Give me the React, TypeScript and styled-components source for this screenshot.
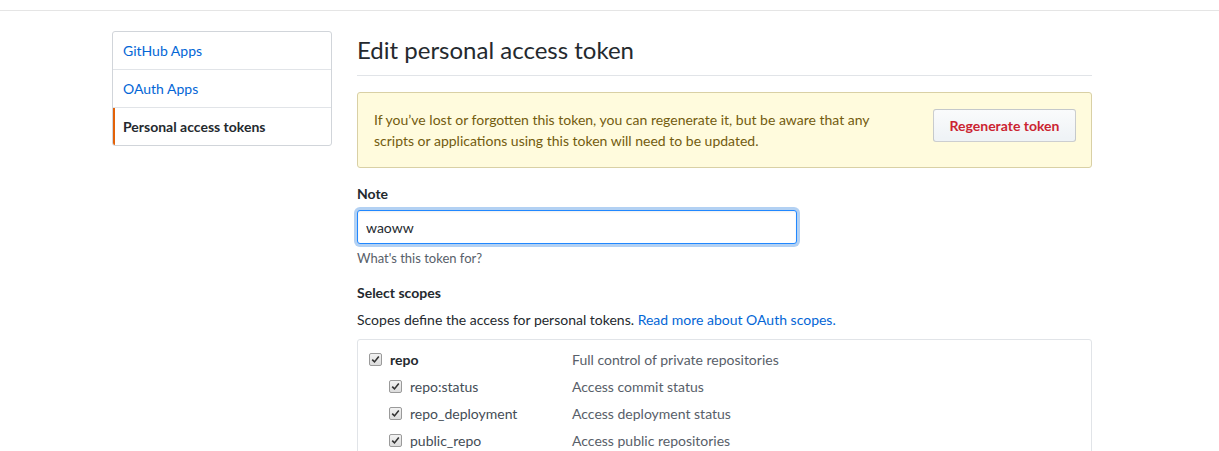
import React from "react";
import styled, { createGlobalStyle } from "styled-components";

const Global = createGlobalStyle`
  html, body { margin: 0; padding: 0; background: #fff; }
  body {
    font-family: "Segoe UI", Lato, "Liberation Sans", sans-serif;
    font-size: 14px;
    line-height: 1.5;
    color: #24292e;
  }
  * { box-sizing: border-box; }
`;

const Header = styled.div`
  height: 11px;
  border-bottom: 1px solid #e5e5e5;
`;

const Container = styled.div`
  display: flex;
  gap: 25px;
  width: 980px;
  margin-left: 112px;
  padding-top: 20px;
  align-items: flex-start;
`;

const Menu = styled.nav`
  width: 220px;
  flex: none;
  border: 1px solid #d1d5da;
  border-radius: 3px;
  overflow: hidden;
`;

const MenuItem = styled.a<{ $selected?: boolean }>`
  display: block;
  height: ${(p) => (p.$selected ? "37px" : "38px")};
  padding: 8px 10px 0 ${(p) => (p.$selected ? "8px" : "10px")};
  font-size: 14px;
  color: ${(p) => (p.$selected ? "#24292e" : "#0366d6")};
  font-weight: ${(p) => (p.$selected ? 700 : 400)};
  text-decoration: none;
  border-bottom: ${(p) => (p.$selected ? "none" : "1px solid #e1e4e8")};
  border-left: ${(p) => (p.$selected ? "2px solid #e36209" : "none")};
`;

const Main = styled.main`
  width: 735px;
  flex: none;
`;

const Subhead = styled.div`
  padding-bottom: 8px;
  border-bottom: 1px solid #e1e4e8;
`;

const Title = styled.h2`
  margin: 0;
  font-size: 24px;
  font-weight: 400;
  line-height: 36px;
  padding-top: 1px;
  height: 36px;
`;

const Flash = styled.div`
  margin-top: 16px;
  display: flex;
  align-items: flex-start;
  justify-content: space-between;
  padding: 16px 15px 16px 16px;
  background: #fffbdd;
  border: 1px solid #d9d0a5;
  border-radius: 3px;
  color: #735c0f;
  font-size: 14px;
  line-height: 21px;
`;

const FlashText = styled.p`
  margin: 0;
`;

const Button = styled.button`
  font-family: inherit;
  font-size: 14px;
  font-weight: 700;
  line-height: 20px;
  color: #cb2431;
  padding: 6px 12px;
  width: 143px;
  height: 33px;
  background: linear-gradient(-180deg, #fafbfc 0%, #eff3f6 90%);
  border: 1px solid rgba(27, 31, 35, 0.2);
  border-radius: 3px;
  cursor: pointer;
`;

const FormGroup = styled.div<{ $top: number }>`
  margin-top: ${(p) => p.$top}px;
`;

const Label = styled.label`
  display: block;
  font-weight: 700;
  font-size: 14px;
  line-height: 21px;
  margin-bottom: 6px;
`;

const Input = styled.input`
  display: block;
  width: 440px;
  height: 34px;
  padding: 6px 8px;
  font-family: inherit;
  font-size: 14px;
  color: #24292e;
  border: 1px solid #2188ff;
  border-radius: 3px;
  outline: none;
  box-shadow: inset 0 1px 2px rgba(27, 31, 35, 0.075), 0 0 0 3px rgba(3, 102, 214, 0.3);
`;

const Note = styled.p`
  margin: 4px 0 0;
  font-size: 13px;
  line-height: 20px;
  color: #586069;
`;

const Desc = styled.p`
  margin: 6px 0 0;
  font-size: 14px;
  line-height: 21px;
`;

const Link = styled.a`
  color: #0366d6;
  text-decoration: none;
`;

const ScopeBox = styled.div`
  margin-top: 9px;
  border: 1px solid #e1e4e8;
  border-radius: 3px;
  padding: 6px 11px 0;
`;

const ScopeRow = styled.div`
  display: grid;
  grid-template-columns: 203px 1fr;
  align-items: center;
  height: 27px;
`;

const ScopeName = styled.label<{ $sub?: boolean }>`
  display: flex;
  align-items: center;
  gap: 8px;
  padding-left: ${(p) => (p.$sub ? "20px" : "0")};
  font-weight: ${(p) => (p.$sub ? 400 : 700)};
  color: ${(p) => (p.$sub ? "#444d56" : "#24292e")};
`;

const ScopeDesc = styled.span`
  color: #586069;
`;

const Check = styled.span`
  display: inline-flex;
  align-items: center;
  justify-content: center;
  width: 13px;
  height: 13px;
  border: 1px solid #9a9a9a;
  border-radius: 2px;
  background: linear-gradient(#f2f2f2, #dcdcdc);
  flex: none;
`;

const CheckBox = () => (
  <Check>
    <svg width="9" height="9" viewBox="0 0 9 9">
      <path d="M1.2 4.6 L3.5 6.9 L7.8 1.6" fill="none" stroke="#333" strokeWidth="1.6" />
    </svg>
  </Check>
);

const scopes = [
  { name: "repo", desc: "Full control of private repositories", main: true },
  { name: "repo:status", desc: "Access commit status" },
  { name: "repo_deployment", desc: "Access deployment status" },
  { name: "public_repo", desc: "Access public repositories" },
];

export default function App() {
  return (
    <>
      <Global />
      <Header />
      <Container>
        <Menu>
          <MenuItem href="#">GitHub Apps</MenuItem>
          <MenuItem href="#">OAuth Apps</MenuItem>
          <MenuItem href="#" $selected>
            Personal access tokens
          </MenuItem>
        </Menu>
        <Main>
          <Subhead>
            <Title>Edit personal access token</Title>
          </Subhead>
          <Flash>
            <FlashText>
              If you’ve lost or forgotten this token, you can regenerate it, but be aware that any
              <br />
              scripts or applications using this token will need to be updated.
            </FlashText>
            <Button>Regenerate token</Button>
          </Flash>
          <FormGroup $top={15}>
            <Label>Note</Label>
            <Input defaultValue="waoww" />
            <Note>What's this token for?</Note>
          </FormGroup>
          <FormGroup $top={14}>
            <Label>Select scopes</Label>
            <Desc>
              Scopes define the access for personal tokens.{" "}
              <Link href="#">Read more about OAuth scopes.</Link>
            </Desc>
            <ScopeBox>
              {scopes.map((s) => (
                <ScopeRow key={s.name}>
                  <ScopeName $sub={!s.main}>
                    <CheckBox />
                    {s.name}
                  </ScopeName>
                  <ScopeDesc>{s.desc}</ScopeDesc>
                </ScopeRow>
              ))}
            </ScopeBox>
          </FormGroup>
        </Main>
      </Container>
    </>
  );
}
